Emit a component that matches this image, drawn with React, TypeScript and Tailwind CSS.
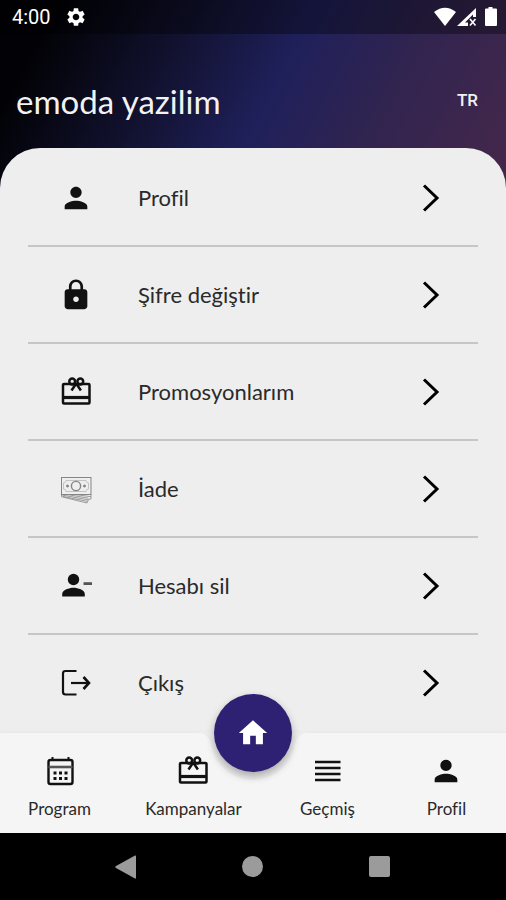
import type { ReactNode } from "react";
import { MdHome, MdLock, MdPerson, MdSettings } from "react-icons/md";

function GiftIcon() {
  return (
    <svg viewBox="0 0 34 34" className="size-[34px]" fill="none" stroke="currentColor" strokeWidth="2.5" aria-hidden="true">
      <rect x="4" y="9" width="26.500" height="19.500" rx="1" />
      <path d="M4 22.500h26.500" strokeWidth="3.200" />
      <circle cx="13.200" cy="6.500" r="2.900" />
      <circle cx="21.300" cy="6.500" r="2.900" />
      <path d="M17.200 8.500 12.500 15.500M17.200 8.500l4.700 7" />
    </svg>
  );
}

function PersonRemoveIcon() {
  return (
    <svg viewBox="0 0 34 34" className="size-[34px]" fill="currentColor" aria-hidden="true">
      <circle cx="14.500" cy="10.500" r="5.7" />
      <path d="M3.200 27.500v-2.6c0-4 7-6.2 11.300-6.2s11.300 2.2 11.300 6.2v2.600z" />
      <path d="M24.500 13.200h8.500v2.800h-8.500z" fill="#555" />
    </svg>
  );
}

function MoneyIcon() {
  return (
    <svg viewBox="0 0 34 34" className="size-[34px]" fill="none" stroke="#858585" strokeWidth="1" aria-hidden="true">
      <rect x="2.500" y="5.500" width="29.500" height="17" />
      <path d="M7 8.500h20q0 2.500 2.500 2.500v6q-2.500 0-2.500 2.500H7q0-2.500-2.500-2.500v-6Q7 11 7 8.500z" strokeWidth=".7" stroke="#b0b0b0" />
      <circle cx="17" cy="14" r="4.600" strokeWidth="1.400" />
      <circle cx="8.500" cy="14" r="1" fill="#777" />
      <circle cx="25.500" cy="14" r="1" fill="#777" />
      <path d="M2.500 22.500v2.200L28 31l1.500-3.500L32 27v-4.500M3 23l26 4.800M8 22.500l21.500 3.700M16 22.500l16 2.200M4 24.500l24 4.800" strokeWidth=".8" />
    </svg>
  );
}

function ExitIcon() {
  return (
    <svg viewBox="0 0 34 34" className="size-[34px]" fill="none" stroke="currentColor" strokeWidth="2.2" aria-hidden="true">
      <path d="M17.500 5H6.500Q4 5 4 7.500v18.500q0 2.500 2.500 2.500h11" />
      <path d="M12 17H30" />
      <path d="M24.500 11 30 17l-5.500 6" strokeWidth="2.600" />
    </svg>
  );
}

function CalendarIcon() {
  return (
    <svg viewBox="0 0 34 34" className="size-[34px]" fill="none" stroke="currentColor" aria-hidden="true">
      <rect x="5.500" y="6" width="24" height="24" rx="2" strokeWidth="2.400" />
      <path d="M9.500 3v3M25.500 3v3" strokeWidth="2" />
      <path d="M5.500 13h24" stroke="#555" strokeWidth="2.600" />
      <path d="M10.500 19h3M16 19h3M21.500 19h3M10.500 24.500h3M16 24.500h3M21.500 24.500h3" strokeWidth="2.800" />
    </svg>
  );
}

function LinesIcon() {
  return (
    <svg viewBox="0 0 34 34" className="size-[34px]" stroke="currentColor" strokeWidth="2.400" aria-hidden="true">
      <path d="M5 8h25.500M5 14h25.500M5 20h25.500M5 26h25.500" />
    </svg>
  );
}

function Chevron() {
  return (
    <svg viewBox="0 0 18 30" className="h-[30px] w-[18px] text-black" fill="none" stroke="currentColor" strokeWidth="3" aria-hidden="true">
      <path d="M2 2.500 15 15 2 27.500" />
    </svg>
  );
}

const menu: { label: string; icon: ReactNode }[] = [
  { label: "Profil", icon: <MdPerson size={34} /> },
  { label: "Şifre değiştir", icon: <MdLock size={34} /> },
  { label: "Promosyonlarım", icon: <GiftIcon /> },
  { label: "İade", icon: <MoneyIcon /> },
  { label: "Hesabı sil", icon: <PersonRemoveIcon /> },
  { label: "Çıkış", icon: <ExitIcon /> },
];

const tabs: { label: string; icon: ReactNode }[] = [
  { label: "Program", icon: <CalendarIcon /> },
  { label: "Kampanyalar", icon: <GiftIcon /> },
  { label: "Geçmiş", icon: <LinesIcon /> },
  { label: "Profil", icon: <MdPerson size={34} /> },
];

function StatusBar() {
  return (
    <div className="flex h-[34px] items-center justify-between bg-black/35 pr-2 pl-3 text-white">
      <div className="flex items-center gap-3.5 font-['Roboto',sans-serif] text-xl">
        <span>4:00</span>
        <MdSettings size={22} />
      </div>
      <svg viewBox="0 0 64 20" className="h-5 w-16" fill="currentColor" aria-hidden="true">
        <path d="M0 5Q11-3.500 22 5L11 19z" />
        <path d="M42 1v9h-3v-2.500L31 15.500h3V19H23z" />
        <path d="m36 12 5.500 6.500M41.500 12 36 18.500" stroke="currentColor" strokeWidth="1.600" />
        <path d="M52 1.500h2.500V0h4v1.500H62q1 0 1 1V18q0 1-1 1H52q-1 0-1-1V2.500q0-1 1-1z" />
      </svg>
    </div>
  );
}

export default function App() {
  return (
    <div className="flex min-h-screen flex-col bg-[#eeeeee] font-['Lato',sans-serif] text-[#111] [font-variant-ligatures:none]">
      <header className="bg-[linear-gradient(118deg,#020206_10%,#11112e_32%,#1f205a_53%,#302450_72%,#46274a_100%)] pb-5">
        <StatusBar />
        <div className="flex h-[134px] items-center justify-between pr-7 pl-4 text-[#f2f2f2]">
          <h1 className="text-[33px] leading-9">emoda yazilim</h1>
          <button type="button" className="font-['Roboto',sans-serif] text-[17px] font-medium">TR</button>
        </div>
      </header>

      <main className="-mt-10 grow rounded-t-[40px] bg-[#eeeeee] px-7 pt-0.5">
        <ul>
          {menu.map((item) => (
            <li key={item.label} className="border-b-2 border-[#c6c6c6] last:border-transparent">
              <button type="button" className="flex h-[95px] w-full items-center pr-[38px] pl-[31px] text-left">
                {item.icon}
                <span className="grow pl-[45px] text-[22px] text-[#2a2a2a]">{item.label}</span>
                <Chevron />
              </button>
            </li>
          ))}
        </ul>
      </main>

      <nav className="relative grid grid-cols-[4fr_5fr_4fr_4fr] bg-[#f5f5f5] pt-[21px] pb-3 shadow-[0_-1px_3px_rgba(0,0,0,0.04)]">
        <svg viewBox="0 0 120 50" className="absolute -top-px left-1/2 h-[50px] w-[120px] -translate-x-1/2" aria-hidden="true">
          <path d="M0 0C10 0 16 4 18 12A42.500 42.500 0 0 0 102 12C104 4 110 0 120 0z" fill="#eeeeee" />
        </svg>
        {tabs.map((tab) => (
          <a key={tab.label} href="#" className="flex flex-col items-center gap-[9px]">
            {tab.icon}
            <span className="text-[17px] leading-6 text-[#2a2a2a]">{tab.label}</span>
          </a>
        ))}
        <button
          type="button"
          aria-label="Home"
          className="absolute -top-[39px] left-1/2 flex size-[78px] -translate-x-1/2 items-center justify-center rounded-full bg-[#2e2173] text-white shadow-[0_4px_9px_rgba(0,0,0,0.3)]"
        >
          <MdHome size={34} />
        </button>
      </nav>

      <div className="grid h-[67px] grid-cols-3 place-items-center bg-black px-[63px] text-[#9b9b9b]">
        <button type="button" aria-label="Back">
          <svg viewBox="0 0 22 24" className="h-6 w-[22px]" fill="currentColor" aria-hidden="true">
            <path d="M20 .500Q21 0 21 1.500v21q0 1.500-1 1L1 13q-1.500-1 0-2z" />
          </svg>
        </button>
        <button type="button" aria-label="Overview home" className="size-[21px] rounded-full bg-current" />
        <button type="button" aria-label="Recent apps" className="size-[21px] rounded-xs bg-current" />
      </div>
    </div>
  );
}
